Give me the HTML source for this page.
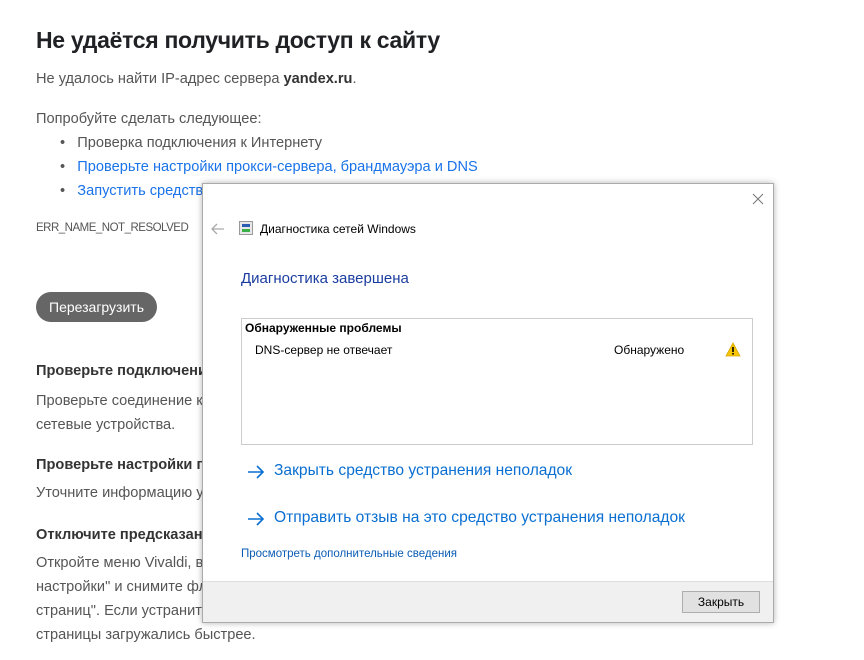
<!DOCTYPE html>
<html><head><meta charset="utf-8"><style>
body{margin:0;width:864px;height:660px;background:#fff;font-family:"Liberation Sans","DejaVu Sans",sans-serif;position:relative;overflow:hidden}
.a{position:absolute;white-space:nowrap}
.t{color:#555;font-size:14.6px;line-height:20px}
.h{color:#333;font-size:14.6px;font-weight:bold;line-height:20px}
.lk{color:#1a73e8}
.dlg{position:absolute;left:202px;top:183px;width:570px;height:438px;background:#fff;border:1px solid #aaa;box-shadow:0 0 6px rgba(0,0,0,.3);overflow:hidden}
.d{position:absolute;white-space:nowrap;color:#000;font-size:12px}
</style></head><body>
<div class="a" style="left:36px;top:24px;font-size:23px;letter-spacing:-0.3px;font-weight:bold;color:#202124;line-height:32px">Не удаётся получить доступ к сайту</div>
<div class="a t" style="left:36px;top:69px">Не удалось найти IP-адрес сервера <b style="color:#333">yandex.ru</b>.</div>
<div class="a t" style="left:36px;top:109px">Попробуйте сделать следующее:</div>
<div class="a t" style="left:60px;top:133px">•&nbsp;&nbsp;&nbsp;Проверка подключения к Интернету</div>
<div class="a t" style="left:60px;top:157px">•&nbsp;&nbsp;&nbsp;<span class="lk">Проверьте настройки прокси-сервера, брандмауэра и DNS</span></div>
<div class="a t" style="left:60px;top:181px">•&nbsp;&nbsp;&nbsp;<span class="lk">Запустить средства диагностики сети Windows</span></div>
<div class="a" style="left:36px;top:222px;font-size:11.5px;letter-spacing:-0.5px;color:#555">ERR_NAME_NOT_RESOLVED</div>
<div class="a" style="left:36px;top:292px;width:121px;height:30px;border-radius:15px;background:#666;color:#fff;font-size:14px;line-height:30px;text-align:center">Перезагрузить</div>
<div class="a h" style="left:36px;top:361px">Проверьте подключение к Интернету</div>
<div class="a t" style="left:36px;top:389px;line-height:24px">Проверьте соединение кабелей и перезагрузите<br>сетевые устройства.</div>
<div class="a h" style="left:36px;top:455px">Проверьте настройки прокси-сервера</div>
<div class="a t" style="left:36px;top:483px">Уточните информацию у администратора</div>
<div class="a h" style="left:36px;top:525px">Отключите предсказание сетевых действий</div>
<div class="a t" style="left:36px;top:551px;line-height:24px">Откройте меню Vivaldi, выберите "Настройки"<br>настройки" и снимите флажок "Быстрая загрузка<br>страниц". Если устранить проблему не удалось,<br>страницы загружались быстрее.</div>

<div class="dlg">
<svg style="position:absolute;left:549px;top:9px" width="12" height="12"><path d="M1 1L11 11M11 1L1 11" stroke="#777" stroke-width="1"/></svg>
<svg style="position:absolute;left:8px;top:39px" width="14" height="12"><path d="M13 6H2M6 1L1 6L6 11" stroke="#aaa" stroke-width="1.3" fill="none"/></svg>
<svg style="position:absolute;left:36px;top:37px" width="14" height="14"><rect x="0.5" y="0.5" width="13" height="13" fill="#e8e8e8" stroke="#999"/><rect x="3" y="3" width="8" height="3" fill="#2a5db0"/><rect x="3" y="8" width="8" height="3" fill="#3bb04a"/></svg>
<div class="d" style="left:57px;top:38px">Диагностика сетей Windows</div>
<div class="d" style="left:38px;top:86px;font-size:15px;color:#1b3d9f">Диагностика завершена</div>
<div style="position:absolute;left:38px;top:134px;width:510px;height:125px;border:1px solid #ccc"></div>
<div class="d" style="left:42px;top:137px;font-weight:bold">Обнаруженные проблемы</div>
<div class="d" style="left:52px;top:159px">DNS-сервер не отвечает</div>
<div class="d" style="left:411px;top:159px">Обнаружено</div>
<svg style="position:absolute;left:522px;top:158px" width="16" height="15"><path d="M8 1L15 14H1Z" fill="#f7c600" stroke="#d9a800" stroke-width=".8"/><rect x="7.2" y="5" width="1.6" height="5" fill="#000"/><rect x="7.2" y="11" width="1.6" height="1.6" fill="#000"/></svg>
<svg style="position:absolute;left:44px;top:281px" width="18" height="14"><path d="M1 7H16M10 1L16 7L10 13" stroke="#0a6fd1" stroke-width="1.6" fill="none"/></svg>
<div class="d" style="left:71px;top:278px;font-size:15.6px;color:#0a6fd1">Закрыть средство устранения неполадок</div>
<svg style="position:absolute;left:44px;top:328px" width="18" height="14"><path d="M1 7H16M10 1L16 7L10 13" stroke="#0a6fd1" stroke-width="1.6" fill="none"/></svg>
<div class="d" style="left:71px;top:325px;font-size:15.6px;color:#0a6fd1">Отправить отзыв на это средство устранения неполадок</div>
<div class="d" style="left:38px;top:364px;font-size:11.5px;color:#0a5cb5">Просмотреть дополнительные сведения</div>
<div style="position:absolute;left:0;top:397px;width:570px;height:41px;background:#f0f0f0;border-top:1px solid #ddd"></div>
<div style="position:absolute;left:479px;top:407px;width:76px;height:20px;border:1px solid #adadad;background:#e1e1e1;font-size:12px;line-height:20px;text-align:center">Закрыть</div>
</div>
</body></html>
